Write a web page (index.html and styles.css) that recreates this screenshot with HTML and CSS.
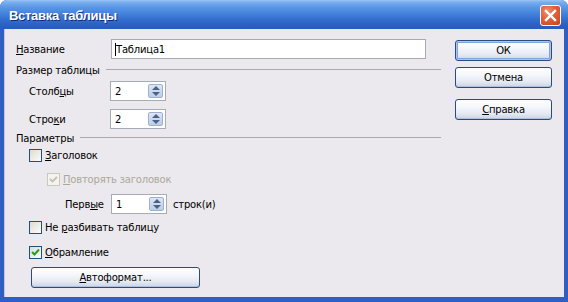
FILE: index.html
```html
<!DOCTYPE html>
<html lang="ru">
<head>
<meta charset="utf-8">
<title>Вставка таблицы</title>
<link rel="stylesheet" href="styles.css">
</head>
<body>
<div class="window">
  <div class="titlebar">
    <span class="title">Вставка таблицы</span>
    <button class="close" aria-label="Закрыть">
      <svg width="13" height="13" viewBox="0 0 13 13"><path d="M2 2 L11 11 M11 2 L2 11" stroke="#fff" stroke-width="2.4" stroke-linecap="square"/></svg>
    </button>
  </div>
  <div class="frame">
    <div class="main">
      <div class="row name-row">
        <label class="lbl lbl-name"><u>Н</u>азвание</label>
        <div class="textbox wide"><span class="caret"></span>Таблица1</div>
      </div>
      <div class="group">
        <span>Размер таблицы</span><span class="line"></span>
      </div>
      <div class="row sub r-cols">
        <label class="lbl lbl-sub">Столб<u>ц</u>ы</label>
        <div class="textbox spin"><span class="val">2</span><span class="spinbtn"></span></div>
      </div>
      <div class="row sub r-rows">
        <label class="lbl lbl-sub">Стро<u>к</u>и</label>
        <div class="textbox spin"><span class="val">2</span><span class="spinbtn"></span></div>
      </div>
      <div class="group g-params">
        <span>Параметры</span><span class="line"></span>
      </div>
      <div class="check sub c-head"><span class="box"></span><span><u>З</u>аголовок</span></div>
      <div class="check sub2 c-rep disabled"><span class="box"><svg width="11" height="11" viewBox="0 0 11 11"><path d="M2 5 L4.5 7.5 L9 3" fill="none" stroke="#c2c0b8" stroke-width="1.8"/></svg></span><span><u>П</u>овторять заголовок</span></div>
      <div class="row first-row">
        <label class="lbl lbl-first">Перв<u>ы</u>е</label>
        <div class="textbox spin"><span class="val">1</span><span class="spinbtn"></span></div>
        <span class="after">строк(и)</span>
      </div>
      <div class="check sub c-split"><span class="box"></span><span>Не <u>р</u>азбивать таблицу</span></div>
      <div class="check sub c-border"><span class="box"><svg width="11" height="11" viewBox="0 0 11 11"><path d="M2 5 L4.5 7.5 L9 2.5" fill="none" stroke="#21a121" stroke-width="2"/></svg></span><span><u>О</u>брамление</span></div>
      <button class="btn autofmt"><u>А</u>втоформат...</button>
    </div>
    <div class="side">
      <button class="btn default">ОК</button>
      <button class="btn cancel">Отмена</button>
      <button class="btn help"><u>С</u>правка</button>
    </div>
  </div>
</div>
</body>
</html>
```
FILE: styles.css
```css
* { box-sizing: border-box; }
html, body { margin: 0; padding: 0; background: #ffffff; }
body { font-family: "DejaVu Sans", Verdana, sans-serif; font-size: 10px; letter-spacing: -0.2px; color: #000; }

.window {
  width: 568px;
  height: 302px;
  display: flex;
  flex-direction: column;
  border-radius: 7px 7px 0 0;
  overflow: hidden;
  background: #2f5fc4;
}

.titlebar {
  height: 29px;
  flex: none;
  display: flex;
  align-items: center;
  justify-content: space-between;
  padding: 0 7px 0 9px;
  background: linear-gradient(#9cc4f4 0%, #78aeee 8%, #5b97e6 25%, #4584dc 45%, #3670d0 65%, #2c60c4 85%, #2a59bb 100%);
}
.title {
  color: #fff;
  font-family: "Liberation Sans", Arial, sans-serif;
  font-weight: bold;
  font-size: 13px;
  letter-spacing: -0.3px;
  text-shadow: 1px 1px 0 #0f2f7a;
  margin-top: 1px;
}
.close {
  width: 21px;
  height: 21px;
  margin: 0;
  padding: 0;
  border: 1px solid #fff;
  border-radius: 3px;
  background: radial-gradient(circle at 35% 30%, #f09070 0%, #e0603a 45%, #c9401c 100%);
  display: flex;
  align-items: center;
  justify-content: center;
  margin-top: 1px;
}

.frame {
  flex: 1;
  display: flex;
  margin: 0 4px 5px 4px;
  background: #ebe9ed;
  border-left: 1px solid #c8c6cc;
}

.main {
  width: 436px;
  padding: 10px 0 0 11px;
  display: flex;
  flex-direction: column;
}
.side {
  display: flex;
  flex-direction: column;
  padding: 11px 0 0 14px;
}

.row { display: flex; align-items: center; }
.lbl { display: block; }
.lbl-name { width: 95px; }
.sub { margin-left: 13px; }
.lbl-sub { width: 81px; }

.textbox {
  height: 20px;
  background: #fff;
  border: 1px solid #a5acb5;
  display: flex;
  align-items: center;
  padding-left: 3px;
}
.wide { width: 315px; }
.caret { width: 1px; height: 13px; background: #000; margin-right: 0; }

.spin {
  width: 56px;
  justify-content: space-between;
  padding: 0 2px 0 4px;
}
.spinbtn {
  width: 15px;
  height: 14px;
  border: 1px solid #9fb0cd;
  border-radius: 2px;
  background:
    linear-gradient(#dbe6f6, #bccde9);
  position: relative;
}
.spinbtn::before, .spinbtn::after {
  content: "";
  position: absolute;
  left: 3px;
  border-left: 4px solid transparent;
  border-right: 4px solid transparent;
}
.spinbtn::before { top: 1px; border-bottom: 4px solid #4d6185; }
.spinbtn::after { bottom: 1px; border-top: 4px solid #4d6185; }

.group {
  display: flex;
  align-items: center;
  height: 16px;
  margin-top: 3px;
}
.group .line {
  flex: 1;
  height: 1px;
  background: #aaa9ae;
  margin-left: 6px;
  margin-top: -1px;
}
.r-cols { margin-top: 3px; }
.r-rows { margin-top: 8px; }
.g-params { margin-top: 1px; }

.check { display: flex; align-items: center; height: 13px; }
.check .box {
  width: 13px;
  height: 13px;
  border: 1px solid #1c5180;
  background: linear-gradient(135deg, #dcdcd7 0%, #f0f0ea 60%, #fbfbf9 100%);
  margin-right: 3px;
  display: flex;
  align-items: center;
  justify-content: center;
}
.c-head { margin-top: 3px; }
.sub2 { margin-left: 31px; }
.c-rep { margin-top: 11px; }
.disabled { color: #aca899; }
.disabled .box { border-color: #cac8bb; background: #f4f3ee; }

.first-row { margin-top: 8px; margin-left: 49px; }
.lbl-first { width: 46px; }
.after { margin-left: 6px; }

.c-split { margin-top: 7px; }
.c-border { margin-top: 12px; }

.btn {
  font-family: "DejaVu Sans", Verdana, sans-serif;
  font-size: 10px;
  letter-spacing: -0.2px;
  color: #000;
  height: 21px;
  border: 1px solid #2e4a7a;
  border-radius: 3px;
  background: linear-gradient(#ffffff 0%, #f6f7fb 35%, #e6ebf3 70%, #c9d4e6 100%);
  padding: 0;
  box-shadow: inset 0 -1px 0 #b3c0d8;
}
.autofmt { width: 169px; margin-left: 15px; margin-top: 8px; }
.side .btn { width: 97px; }
.default {
  box-shadow: inset 0 0 0 1px #a8c6f2, inset 0 0 0 2px #7aa4e4;
}
.cancel { margin-top: 6px; }
.help { margin-top: 11px; }
```
